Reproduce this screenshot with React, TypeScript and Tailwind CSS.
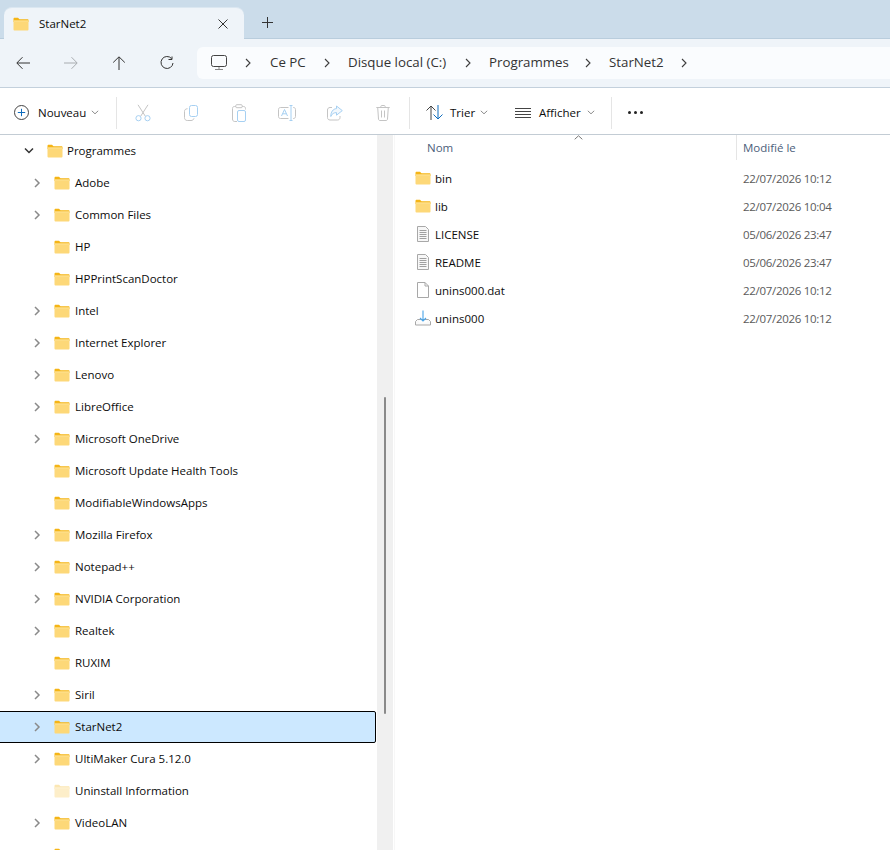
import React from "react";

function Folder({ className = "", faded = false }: { className?: string; faded?: boolean }) {
  return (
    <svg width="16" height="14" viewBox="0 0 16 14" className={className}>
      <path d="M0.5 2C0.5 1.2 1 .8 1.6 .8H5L6.5 2.2H14.5C15.2 2.2 15.5 2.6 15.5 3.2V5H.5Z" fill={faded ? "#fbe7b4" : "#f5b516"} />
      <path d="M.5 3.6H15.5V12.6C15.5 13.2 15.1 13.5 14.6 13.5H1.4C.9 13.5 .5 13.2 .5 12.6Z" fill={faded ? "#fdeec9" : "#fdd878"} />
      <path d="M.5 3.6H15.5V4.3H.5Z" fill={faded ? "#fff5dd" : "#ffe9a8"} />
    </svg>
  );
}

function Chevron({ dark = false, className = "" }: { dark?: boolean; className?: string }) {
  return (
    <svg width="8" height="10" viewBox="0 0 8 10" className={className} fill="none" stroke={dark ? "#3d3d3d" : "#8a8a8a"} strokeWidth={dark ? 1.1 : 1.5}>
      <path d="M2 1l4 4-4 4" />
    </svg>
  );
}

function SmallDown() {
  return (
    <svg width="8" height="5" viewBox="0 0 8 5" fill="none" stroke="#8c8c8c" strokeWidth="1">
      <path d="M.8 .8L4 3.8 7.2 .8" />
    </svg>
  );
}

const treeRows: { name: string; arrow: boolean; faded?: boolean; selected?: boolean }[] = [
  { name: "Adobe", arrow: true },
  { name: "Common Files", arrow: true },
  { name: "HP", arrow: false },
  { name: "HPPrintScanDoctor", arrow: false },
  { name: "Intel", arrow: true },
  { name: "Internet Explorer", arrow: true },
  { name: "Lenovo", arrow: true },
  { name: "LibreOffice", arrow: true },
  { name: "Microsoft OneDrive", arrow: true },
  { name: "Microsoft Update Health Tools", arrow: false },
  { name: "ModifiableWindowsApps", arrow: false },
  { name: "Mozilla Firefox", arrow: true },
  { name: "Notepad++", arrow: true },
  { name: "NVIDIA Corporation", arrow: true },
  { name: "Realtek", arrow: true },
  { name: "RUXIM", arrow: false },
  { name: "Siril", arrow: true },
  { name: "StarNet2", arrow: true, selected: true },
  { name: "UltiMaker Cura 5.12.0", arrow: true },
  { name: "Uninstall Information", arrow: false, faded: true },
  { name: "VideoLAN", arrow: true },
  { name: "", arrow: false },
];

function TextFileIcon() {
  return (
    <svg width="14" height="16" viewBox="0 0 14 16" fill="none">
      <path d="M1.500 .5H9.500L12.500 3.500V15.500H1.500Z" fill="#f7f7f7" stroke="#a8a8a8" />
      <path d="M3.500 4.500H10.500M3.500 6.500H10.500M3.500 8.500H10.500M3.500 10.500H10.500M3.500 12.500H10.500" stroke="#a0a0a0" />
    </svg>
  );
}

function BlankFileIcon() {
  return (
    <svg width="14" height="16" viewBox="0 0 14 16" fill="none">
      <path d="M1.500 .5H9L12.500 4V15.500H1.500Z" fill="#fff" stroke="#a8a8a8" />
      <path d="M9 .5V4H12.500" stroke="#a8a8a8" />
    </svg>
  );
}

function SetupIcon() {
  return (
    <svg width="16" height="16" viewBox="0 0 16 16" fill="none">
      <path d="M.5 15V11.500L2.500 9.500H13.500L15.500 11.500V15Z" fill="#fafafa" stroke="#a8a8a8" />
      <path d="M4 11.500H12" stroke="#fff" strokeWidth="2" />
      <path d="M8 .5V11M5 8L8 11L11 8" stroke="#4aa4e8" strokeWidth="1.1" />
    </svg>
  );
}

const files: { name: string; date: string; icon: React.ReactNode }[] = [
  { name: "bin", date: "22/07/2026 10:12", icon: <Folder /> },
  { name: "lib", date: "22/07/2026 10:04", icon: <Folder /> },
  { name: "LICENSE", date: "05/06/2026 23:47", icon: <TextFileIcon /> },
  { name: "README", date: "05/06/2026 23:47", icon: <TextFileIcon /> },
  { name: "unins000.dat", date: "22/07/2026 10:12", icon: <BlankFileIcon /> },
  { name: "unins000", date: "22/07/2026 10:12", icon: <SetupIcon /> },
];

const pale = "#a6d0f2";
const paleGrey = "#c4c4c4";

const disabledIcons: React.ReactNode[] = [
  <svg key="cut" width="16" height="18" viewBox="0 0 16 18" fill="none" strokeWidth="1">
    <path d="M3 .8L10.200 12M13 .8L5.800 12" stroke={paleGrey} />
    <circle cx="3.500" cy="14.200" r="2.600" stroke={pale} />
    <circle cx="12.500" cy="14.200" r="2.600" stroke={pale} />
  </svg>,
  <svg key="copy" width="14" height="16" viewBox="0 0 14 16" fill="none">
    <rect x="5.500" y=".5" width="8" height="11" rx="2" stroke={pale} />
    <path d="M3.500 3.700C1.500 3.900 .5 4.800 .5 6.400V12.500C.5 14.300 1.500 15.500 3.300 15.500H7C8.600 15.500 9.600 14.700 10 13.300" stroke={paleGrey} />
  </svg>,
  <svg key="paste" width="14" height="18" viewBox="0 0 14 18" fill="none">
    <path d="M.5 15V4.500C.5 3.200 1.200 2.500 2.500 2.500H3.800M10.200 2.500H11.500C12.800 2.500 13.500 3.200 13.500 4.500V5.500M.5 15C.5 16.500 1.300 17.500 2.800 17.500H5" stroke={paleGrey} />
    <rect x="3.800" y=".7" width="6.400" height="3" rx="1" stroke={paleGrey} />
    <rect x="5.500" y="6.500" width="8" height="11" rx="1.500" stroke={pale} />
  </svg>,
  <svg key="rename" width="18" height="16" viewBox="0 0 18 16" fill="none">
    <path d="M10.500 2.500H2.500C1.300 2.500 .5 3.300 .5 4.500V11.500C.5 12.700 1.300 13.500 2.500 13.500H10.500" stroke={paleGrey} />
    <path d="M15 2.500H15.500C16.700 2.500 17.500 3.300 17.500 4.500V11.500C17.500 12.700 16.700 13.500 15.500 13.500H15" stroke={paleGrey} />
    <path d="M11.500 .5H14.500M13 .5V15.500M11.500 15.500H14.500" stroke={pale} />
    <path d="M3.500 11L6.500 4.500L9.500 11M4.600 8.800H8.400" stroke={pale} />
  </svg>,
  <svg key="share" width="16" height="16" viewBox="0 0 16 16" fill="none">
    <path d="M5 2.500H3C1.500 2.500 .5 3.500 .5 5V12.500C.5 14 1.500 15 3 15H10.500C12 15 13 14 13 12.500V11" stroke={paleGrey} />
    <path d="M9.500 1L15.300 5.600L9.500 10.200V7.600C7 7.600 5 8.600 3.800 11.500C3.800 7 6 3.800 9.500 3.600Z" stroke={pale} fill="#f2f8fd" />
  </svg>,
  <svg key="del" width="14" height="16" viewBox="0 0 14 16" fill="none" stroke={paleGrey}>
    <path d="M.3 2.500H13.700M4.800 2.500V1.600C4.800 1 5.200 .5 5.800 .5H8.200C8.800 .5 9.200 1 9.200 1.600V2.500" />
    <path d="M1.700 2.500L2.500 14C2.600 15 3.100 15.500 4 15.500H10C10.900 15.500 11.400 15 11.500 14L12.300 2.500" />
    <path d="M5.500 5.500V12.500M8.500 5.500V12.500" />
  </svg>,
];

function NavButton({ children }: { children: React.ReactNode }) {
  return <div className="w-12 h-8 flex items-center justify-center shrink-0">{children}</div>;
}

function Crumb({ label, className }: { label: string; className: string }) {
  return (
    <div className={`${className} shrink-0 flex items-center justify-between`}>
      <span className="whitespace-nowrap">{label}</span>
      <Chevron dark />
    </div>
  );
}

export default function App() {
  return (
    <div className="w-[890px] h-[850px] overflow-hidden bg-white flex flex-col text-[11.5px] text-[#0c0c0c] [font-family:'Open_Sans','Noto_Sans',sans-serif]">
      {/* Tabs */}
      <div className="h-[39px] shrink-0 bg-[#cbdcea] flex items-end pl-1 border-b border-[#b9cddd]">
        <div className="relative -mb-px w-[240px] h-[32px] bg-[#eff4f9] rounded-t-lg flex items-center pl-[9px] pr-[16px] border-t border-[#dbe7f1]">
          <Folder className="w-[16px] h-[14px] shrink-0" />
          <span className="ml-[10px] flex-1">StarNet2</span>
          <svg width="10" height="10" viewBox="0 0 10 10" stroke="#333" fill="none">
            <path d="M.5 .5L9.500 9.500M9.500 .5L.5 9.500" />
          </svg>
        </div>
        <div className="w-[46px] h-[32px] flex items-center justify-center">
          <svg width="11" height="11" viewBox="0 0 11 11" stroke="#333" fill="none">
            <path d="M5.500 0V11M0 5.500H11" />
          </svg>
        </div>
      </div>

      {/* Navigation */}
      <div className="h-[49px] shrink-0 bg-[#eff4f9] flex items-center border-b border-[#c3d0dc] pb-px">
        <div className="flex shrink-0 -ml-px">
          <NavButton>
            <svg width="14" height="14" viewBox="0 0 14 14" fill="none" stroke="#333" strokeWidth="1">
              <path d="M14 7H1M6.500 1.200L.8 7l5.700 5.800" />
            </svg>
          </NavButton>
          <NavButton>
            <svg width="14" height="14" viewBox="0 0 14 14" fill="none" stroke="#a8acb0" strokeWidth="1">
              <path d="M0 7H13M7.500 1.200L13.200 7l-5.700 5.800" />
            </svg>
          </NavButton>
          <NavButton>
            <svg width="14" height="14" viewBox="0 0 14 14" fill="none" stroke="#333" strokeWidth="1">
              <path d="M7 14V1M1.200 6.500L7 .8l5.800 5.700" />
            </svg>
          </NavButton>
          <NavButton>
            <svg width="14" height="14" viewBox="0 0 14 14" fill="none" stroke="#333" strokeWidth="1">
              <path d="M11.600 2.600A6 6 0 1 0 13 7" />
              <path d="M8.500 3.500H12V.5" />
            </svg>
          </NavButton>
        </div>
        <div className="ml-[6px] flex-1 h-[32px] bg-[#fafcfe] rounded-l-md flex items-center pl-[14px] text-[13.3px] text-[#333]">
          <div className="w-[41px] mr-[18px] shrink-0 flex items-center justify-between">
            <svg width="16" height="15" viewBox="0 0 16 15" fill="none" stroke="#444">
              <rect x=".5" y=".5" width="15" height="11" rx="2" />
              <path d="M4 14.500H12M8 12V14" stroke="#888" />
            </svg>
            <Chevron dark />
          </div>
          <Crumb label="Ce PC" className="w-[61px] mr-[17px]" />
          <Crumb label="Disque local (C:)" className="w-[124px] mr-[17px]" />
          <Crumb label="Programmes" className="w-[103px] mr-[17px]" />
          <Crumb label="StarNet2" className="w-[79px]" />
        </div>
      </div>

      {/* Toolbar */}
      <div className="h-[47px] shrink-0 bg-white flex items-center border-b border-[#c3ccd4] pt-[3px]">
        <div className="w-[116px] shrink-0 flex items-center pl-[14px]">
          <svg width="15" height="15" viewBox="0 0 15 15" fill="none">
            <circle cx="7.500" cy="7.500" r="7" stroke="#444" />
            <path d="M7.500 3.800V11.200M3.800 7.500H11.200" stroke="#0f6cbd" />
          </svg>
          <span className="ml-[9px]">Nouveau</span>
          <span className="ml-[5px]">
            <SmallDown />
          </span>
        </div>
        <div className="w-px h-8 bg-[#e5e5e5] shrink-0" />
        <div className="flex shrink-0 pl-[2px]">
          {disabledIcons.map((icon, i) => (
            <NavButton key={i}>{icon}</NavButton>
          ))}
        </div>
        <div className="w-px h-8 bg-[#e5e5e5] shrink-0 ml-[2px]" />
        <div className="w-[201px] flex items-center shrink-0 pl-[16px]">
          <svg width="17" height="15" viewBox="0 0 17 15" fill="none">
            <path d="M5 15V1M.5 5.500L5 1l4.500 4.500" stroke="#444" />
            <path d="M12 0V14M7.500 9.500L12 14l4.500-4.500" stroke="#0f6cbd" />
          </svg>
          <span className="ml-[7px] w-[30px]">Trier</span>
          <span className="mr-[27px]">
            <SmallDown />
          </span>
          <svg width="16" height="12" viewBox="0 0 16 12" fill="none" stroke="#444">
            <path d="M0 1.500H16M0 4.500H16M0 7.500H16M0 10.500H16" />
          </svg>
          <span className="ml-[8px] w-[48px]">Afficher</span>
          <SmallDown />
        </div>
        <div className="w-px h-8 bg-[#e5e5e5] shrink-0" />
        <div className="flex gap-[3px] ml-[16px]">
          <span className="w-[3px] h-[3px] bg-[#222] rounded-full" />
          <span className="w-[3px] h-[3px] bg-[#222] rounded-full" />
          <span className="w-[3px] h-[3px] bg-[#222] rounded-full" />
        </div>
      </div>

      {/* Body */}
      <div className="flex-1 min-h-0 flex">
        <div className="w-[377px] shrink-0 overflow-hidden">
          <div className="h-8 flex items-center pl-[24px]">
            <svg width="10" height="8" viewBox="0 0 10 8" fill="none" stroke="#333" strokeWidth="1.5">
              <path d="M1 1.500L5 5.500L9 1.500" />
            </svg>
            <Folder className="ml-[13px]" />
            <span className="ml-[4px]">Programmes</span>
          </div>
          {treeRows.map((r, i) => (
            <div
              key={i}
              className={
                r.selected
                  ? "h-8 flex items-center pl-[33px] -ml-px mr-[1px] bg-[#cce8ff] border border-black rounded-r-[2px]"
                  : "h-8 flex items-center pl-[33px]"
              }
            >
              <span className="w-[8px] shrink-0">{r.arrow && <Chevron />}</span>
              <Folder faded={r.faded} className="ml-[13px] shrink-0" />
              <span className="ml-[5px] whitespace-nowrap">{r.name}</span>
            </div>
          ))}
        </div>

        <div className="relative w-[16px] shrink-0 bg-[#f0f0f0]">
          <div className="absolute left-[7px] top-[262px] w-[2px] h-[317px] bg-[#8a8a8a] rounded-full" />
        </div>
        <div className="w-px shrink-0 bg-[#f7f7f7] ml-[1px]" />

        <div className="flex-1 min-w-0">
          <div className="h-[25px] flex text-[#4c607a] relative">
            <div className="w-[343px] border-r border-[#e5e5e5] pl-[33px] flex items-center -ml-px">Nom</div>
            <div className="pl-[6px] flex items-center">Modifié le</div>
            <svg className="absolute left-[179px] top-[0px]" width="9" height="5" viewBox="0 0 9 5" fill="none" stroke="#777">
              <path d="M.7 4.300L4.500 .8L8.300 4.300" />
            </svg>
          </div>
          <div className="pt-[4px]">
            {files.map((f) => (
              <div key={f.name} className="h-[28px] flex items-center">
                <div className="w-[20px] ml-[18px] mr-[2px] flex justify-center shrink-0">{f.icon}</div>
                <span className="pt-[2px] w-[308px] shrink-0">{f.name}</span>
                <span className="pt-[2px] text-[#5a5a5a] whitespace-nowrap tracking-[-0.3px]">{f.date}</span>
              </div>
            ))}
          </div>
        </div>
      </div>
    </div>
  );
}
